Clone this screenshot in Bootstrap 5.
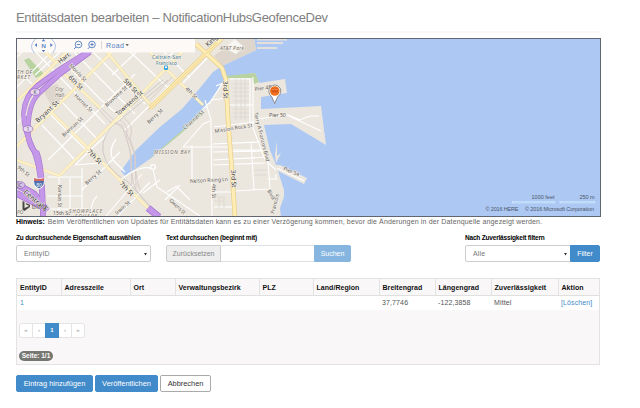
<!DOCTYPE html>
<html lang="de">
<head>
<meta charset="utf-8">
<title>Entitätsdaten bearbeiten</title>
<link href="https://cdn.jsdelivr.net/npm/bootstrap@5.3.0/dist/css/bootstrap.min.css" rel="stylesheet">
<style>
html{font-size:7px}
body{font-family:"Liberation Sans",Arial,sans-serif;font-size:7px;line-height:10px;color:#555;background:#fff;overflow:hidden}
.page{width:584px;margin-left:16px}
.title{font-size:13px;line-height:16px;color:#808080;font-weight:400;height:31px;padding-top:10px;letter-spacing:-.33px;white-space:nowrap}
.rule{height:2px;background:#f8f8f8;margin-bottom:5px}
.map{height:179px;border:1px solid #5f6671;width:585px}
.map svg{display:block;width:583px;height:177px}
.hint{height:17px;line-height:10px;font-size:7px;color:#666;letter-spacing:.15px;white-space:nowrap}
.hint b{color:#000;margin-right:3px;letter-spacing:0}
.lbl{display:block;color:#000;font-weight:700;font-size:6.5px;letter-spacing:-.19px;line-height:8px;height:11px;white-space:nowrap}
.form-select,.form-control,.btn{height:17px;min-height:0;font-size:7px;line-height:9px;padding:3px 7px;border-radius:2px;white-space:nowrap}
.form-select{border-color:#ccc;color:#777;letter-spacing:.15px;background-position:right 3px center;background-size:3px 4px;background-image:url("data:image/svg+xml,%3Csvg xmlns='http://www.w3.org/2000/svg' viewBox='0 0 4 4'%3E%3Cpath d='M0 .5h4L2 4z' fill='%23333'/%3E%3C/svg%3E")}
.btn-primary{background:#428bca;border-color:#428bca}
.btn-primary:disabled{background:#86b6e0;border-color:#86b6e0;opacity:1}
.btn-reset{background:#eee;border-color:#ccc;color:#888;width:55px}
.btn-search{width:37px}.btn-filter{width:30px}
.controls{height:44px}
.w-prop{width:135px}.w-search{width:185px;margin-left:15px}.w-filter{width:135px}
.grid-box{border:1px solid #e3e3e3;background:#f9f7f8;height:87px}
.grid-box table{table-layout:fixed;width:582px;margin:0;--bs-table-bg:transparent}
.grid-box th,.grid-box td{padding:0 3px!important;white-space:nowrap;font-size:7px;line-height:14px;height:15px}
.grid-box th{color:#111;height:16px;letter-spacing:.05px;border-right:1px solid #e3e3e3;border-bottom:1px solid #e0e0e0}
.grid-box th:last-child{border-right:0}
.grid-box td{background:#fff;border:0;color:#555;letter-spacing:.12px}
.link{color:#428bca;text-decoration:none}
.pagination{margin:13px 0 0 2px;height:15px}
.page-link{padding:0;width:14px;height:15px;line-height:13px;text-align:center;font-size:6px;color:#999;border-color:#e4e4e4}
.page-item.active .page-link{background:#428bca;border-color:#428bca;font-weight:700}
.page-badge{display:block;width:34px;height:10px;line-height:10px;border-radius:5px;background:#777772;color:#fff;font-weight:700;font-size:6.5px;text-align:center;margin:13px 0 0 2px;white-space:nowrap}
.actions{margin-top:10px;gap:2px}
.actions .btn{padding-left:0;padding-right:0;font-size:7.4px}
.b1{width:77px}.b2{width:63px}.b3{width:51px}
.btn-cancel{border-color:#aaa;color:#333;background:#fff}
</style>
<script src="https://cdn.jsdelivr.net/npm/bootstrap@5.3.0/dist/js/bootstrap.bundle.min.js"></script>
</head>
<body>
<main class="page">
<h1 class="title m-0">Entitätsdaten bearbeiten – NotificationHubsGeofenceDev</h1>
<div class="rule"></div>
<div class="map">
<svg viewBox="17 39 583 177" preserveAspectRatio="none" font-family="Noto Sans, sans-serif" font-size="6" fill="#555">
<rect x="16" y="38" width="585" height="180" fill="#adc8f3"/>
<!-- land -->
<path fill="#ebe6de" d="M16 38H254L256 50 222 66 213 72 200 88 182 109 160 127 136 150 121 171 125 176 150 159 168 144 184 129 202 112 213 97 226 77 255 73 259 83 285 79 287 93 261 97V109L321 106 326 145 291 124 264 125 270 150 276 165 280 165 307 178 304 184 278 171 284 190V197L280 208 281 218H16Z"/>
<path fill="#ebe6de" d="M277 141L275 155 276 163 281 153 277 156Z"/>
<g stroke="#e5e0db" stroke-width="1.8"><path d="M257 39.5H287M257 43H283M257 48H277"/></g>
<!-- parks and landmarks -->
<path fill="#b9d3a0" d="M226 76L255 73 259 82 254 84 252 78H227ZM24 60L29 58 44 74 36 78ZM184 129L202 111 203 114 190 126 172 141 148 160 150 158Z"/>
<path fill="#ded6cc" d="M43 90L57 84 67 97 52 107ZM238 38H254L256 50 222 66 214 56Z"/>
<path fill="#f8f6f2" d="M225 48L235 39 244 47 236 54Z"/>
<!-- local streets -->
<g fill="none" stroke="#fff" stroke-width="1.1">
<path d="M16 68L40 92M30 46L85 103 105 124M62 60L100 99 122 118M70 48L135 114M85 44L145 104M48 112L90 154M60 100L98 140M123 45L168 88M160 48L190 78M42 125L75 160"/>
<path d="M16 88L55 48M16 125L24 116M48 160L135 74M75 165L104 137 133 103M82 190L120 152M112 75L145 44M125 130L170 85M35 75L60 52M16 58L30 44M165 60L185 40M183 83L210 55"/>
<path d="M48 177H82M47 196H82M46 209H88M59 177V216M70 178V214M82 168V216M75 165L100 163M90 216Q91 202 97 196M106 216L142 174M118 216L150 182M143 193L160 180M157 187L200 216M153 169L157 187M167 192L177 186M177 187L190 200M165 200L180 185"/>
<path d="M205 100L211 120 212 216M202 110L212 100 227 98M183 147L203 124 210 121M183 147H228M192 145V180M213 144L260 142M213 152L265 151M213 165L265 163M213 160L267 157M234 191L268 189M213 192H234M214 207H234M251 142L254 190M268 161L270 189M253 77V128L265 160 276 170M230 79H250V127M229 105H253M214 127L254 122M229 150H262M276 174V179H268M216 86L225 82M209 104L222 84"/>
<path d="M257 119L288 115 300 120 310 116H319M289 116L321 131M277 168L304 181"/>
</g>
<g fill="none" stroke="#dcd7d0" stroke-width=".8"><path d="M233 84H249M233 88H249M233 92H249M233 96H249M233 101H249M233 109H249M233 113H249M233 117H249M236 79V120M241 79V120M245 79V120M214 197H224V209M214 201H224M219 197V209M254 170H267M254 175H267"/></g>
<!-- railway -->
<g fill="none" stroke="#d9ceca" stroke-width="1"><path d="M120 120Q130 126 126 136L131 155Q131 180 136 190L156 214M124 118Q135 126 130 138L135 155Q135 178 140 190M95 105L110 122 122 125 130 150 132 185M100 107L126 132 135 155 136 188M150 100L172 77"/></g>
<g fill="none" stroke="#cfcac5" stroke-width="1"><path d="M168 80L120 120Q100 135 103 152T128 182L150 206M163 80L118 117"/></g>
<g fill="none" stroke="#fff" stroke-width="1.3"><path d="M116 139Q108 150 113 160L125 172M120 180L130 173Q142 166 151 168"/><circle cx="153" cy="167" r="2.4"/></g>
<!-- arterial roads -->
<g fill="none" stroke="#eadca6" stroke-width="2.8"><path d="M16 102L76 43M16 147L40 123 112 52M60 175L119 117 181 53 196 38M101 45L153 108M148 50L164 67 203 105M60 70L100 108M47 108L87 147 156 216M16 160L60 176M32 38L55 62"/></g>
<g fill="none" stroke="#fff2c8" stroke-width="1.9"><path d="M16 102L76 43M16 147L40 123 112 52M60 175L119 117 181 53 196 38M101 45L153 108M148 50L164 67 203 105M60 70L100 108M47 108L87 147 156 216M16 160L60 176M32 38L55 62"/></g>
<g fill="none" stroke="#e7cf89" stroke-width="4.6"><path d="M222 38L150 108M196 44L222 68 226 80 228 120 231 158 235 217"/></g>
<g fill="none" stroke="#ffedb5" stroke-width="3.2"><path d="M222 38L150 108M196 44L222 68 226 80 228 120 231 158 235 217"/></g>
<path d="M217 43L148 110" stroke="#e3c986" stroke-width=".8"/>
<!-- freeway -->
<g fill="none"><path d="M94 48L62 68 37 86Q25 96 24 112T34 151Q42 170 43 217" stroke="#ab7cd2" stroke-width="5.4"/><path d="M90 52L60 74 38 94Q29 103 28 125T37 153Q43 170 43 217" stroke="#ab7cd2" stroke-width="5.4"/><path d="M16 184L34 194 47 211M16 193L43 207M148 208L159 217" stroke="#ab7cd2" stroke-width="7"/><path d="M94 48L62 68 37 86Q25 96 24 112T34 151Q42 170 43 217" stroke="#c497e8" stroke-width="4"/><path d="M90 52L60 74 38 94Q29 103 28 125T37 153Q43 170 43 217" stroke="#c497e8" stroke-width="4"/><path d="M16 184L34 194 47 211M16 193L43 207M148 208L159 217" stroke="#c497e8" stroke-width="5.4"/></g>
<path d="M38 90Q28 99 26 116" stroke="#ebe6de" stroke-width="1.2" fill="none"/>
<!-- route shields -->
<g stroke="#9268b7" stroke-width=".7"><ellipse cx="35" cy="92" rx="5" ry="3.3" fill="#e8d8f3"/><ellipse cx="28" cy="129" rx="5" ry="3.3" fill="#e8d8f3"/><ellipse cx="20" cy="185" rx="5" ry="3.3" fill="#d9bfec"/></g>
<text x="35" y="94" font-size="5" text-anchor="middle">K</text><text x="28" y="131" font-size="5" text-anchor="middle">1</text><text x="17.5" y="187" font-size="5">JC</text>
<path d="M34 178Q39 180 44 178 46 186 39 189 32 186 34 178Z" fill="#4e70ae" stroke="#fff"/><path d="M34 178Q39 180 44 178V181H34Z" fill="#d46a62"/><text x="39" y="187" font-size="5" fill="#fff" text-anchor="middle">80</text>
<!-- street names -->
<g stroke="#f5f0e7" stroke-width="1" paint-order="stroke">
<g fill="#333" font-size="6.4">
<text transform="translate(60 64) rotate(-39)">Harr.</text><text transform="translate(68 78) rotate(44)">6th St</text><text transform="translate(123 81) rotate(47)">5th St</text><text transform="translate(38 123) rotate(-43)" textLength="29">Bryant St</text><text transform="translate(118 116) rotate(-42)" textLength="34" font-size="6">Townsend St</text><text transform="translate(87 152) rotate(46)">7th St</text><text transform="translate(119 184) rotate(46)">7th St</text><text transform="translate(223 81) rotate(88)">3rd St</text><text transform="translate(231 170) rotate(87)">3rd St</text><text transform="translate(208 47) rotate(-43)">King</text><text transform="translate(23 193) rotate(40)" font-size="7">Central F</text>
</g>
<g font-size="5.2">
<text transform="translate(69 66) rotate(46)">Morris St</text><text transform="translate(74 96) rotate(45)" textLength="23">Harriet St</text><text transform="translate(64 137) rotate(-43)" textLength="26">Brannan St</text><text transform="translate(107 107) rotate(-43)" textLength="28">Bluxome St</text><text transform="translate(149 124) rotate(-43)">Berry St</text><text transform="translate(87 185) rotate(-42)">Berry St</text><text transform="translate(185 89) rotate(45)">4th St</text><text transform="translate(185 130) rotate(-42)" textLength="26">Channel St</text><text transform="translate(117 215) rotate(-42)" textLength="18">Irwin St</text><text transform="translate(58 185) rotate(90)" textLength="22">Kansas St</text><text x="53" y="215">15th St</text><text transform="translate(169 201) rotate(43)" textLength="20">Owens St</text><text x="190" y="183" transform="rotate(-3 190 183)" textLength="38">Nelson Rising Ln</text><text transform="translate(212 184) rotate(90)">4th St</text><text transform="translate(215 133) rotate(-9)" textLength="38">Mission Rock St</text><text transform="translate(254 113) rotate(76)" textLength="50">Terry A Francois Blvd</text><text transform="translate(267 191) rotate(60)">Blvd</text><text transform="translate(274 214) rotate(-75)">Francois</text><text x="255" y="91" transform="rotate(-8 255 91)">Pier 48</text><text x="269" y="117">Pier 50</text><text transform="translate(283 170) rotate(22)">Pier 54</text>
<text transform="translate(17 168) rotate(40)">9th St</text>
</g>
<g font-style="italic" font-size="5" fill="#766f69"><text x="17" y="73.5" textLength="15">TH OF</text><text x="17" y="79" textLength="13">RKET</text><text x="55" y="91">City</text><text x="55" y="97">Hall</text><text x="220" y="50" textLength="24">AT&amp;T Park</text><text x="154" y="154" textLength="36">MISSION BAY</text><text x="69" y="212.5" textLength="33">SHOWPLACE</text><text x="75" y="218" textLength="22">SQUARE</text><text x="17" y="214">PO</text></g>
<g font-size="4.8" fill="#397799"><text x="152" y="59" textLength="29">Caltrain-San</text><text x="156" y="64.5" textLength="21">Francisco</text></g>
</g>
<rect x="164" y="65.5" width="4" height="4.5" rx="1" fill="#3ca2e0"/><path d="M165 66.5h2v1.5h-2z" fill="#fff"/>
<!-- navigation bar -->
<path d="M17 38H195V52.5H17Z" fill="#fcf9f7"/>
<path d="M35.5 39Q28 46 34.5 53M51.5 39Q59 46 52.5 53" fill="none" stroke="#9db5df" stroke-width=".8"/>
<g fill="#537cc0"><path d="M41.8 41.3L43.5 39 45.2 41.3ZM41.8 50L43.5 52.3 45.2 50ZM37 43.3L34.6 45.1 37 47ZM50.3 43.3L52.8 45.1 50.3 47Z"/><text x="41.2" y="47.6" font-size="6" font-weight="600">N</text></g>
<g fill="none" stroke="#537cc0" stroke-width=".9"><circle cx="78.5" cy="44.5" r="3.3"/><path d="M76.8 44.5h3.4M76 47l-2 2"/><circle cx="92" cy="44.5" r="3.3"/><path d="M90.3 44.5h3.4M92 42.8v3.4M89.7 47l-2 2"/></g>
<path d="M101.5 41V49" stroke="#ccc" stroke-width=".7"/><text x="106" y="47.5" font-family="Liberation Sans" font-size="7" textLength="18" fill="#537cc0">Road</text><path d="M125.5 44h3.4l-1.7 2.3z" fill="#666"/>
<!-- pushpin -->
<path d="M274.7 103.5L271.8 97Q268.8 94.5 268.8 91A6 6 0 0 1 280.8 91Q280.8 94.5 277.6 97Z" fill="#fff" stroke="#777" stroke-width=".8"/><circle cx="274.8" cy="91" r="4.8" fill="#ef701d"/><path d="M271.7 88.5h6.2v4h-6.2z" fill="#d95817"/><path d="M271.8 89.5h6" stroke="#f6a365" stroke-width=".6"/>
<!-- provider logo, scale and copyright -->
<path d="M22.5 201L24.5 202V208L29.2 206 26.2 204.5 25.7 203 30 204.8V207L24.5 211 22.5 209.5Z" fill="#4a4845"/><text x="32" y="208.5" font-family="Liberation Sans" font-size="6.5" fill="#67625f" textLength="14">bing</text>
<g font-family="Liberation Sans" font-size="5.5" fill="#4c5667"><text x="531.5" y="199.3" textLength="23">1000 feet</text><text x="579.5" y="199.3" textLength="15">250 m</text><text x="485.5" y="210.6" textLength="33">© 2016 HERE</text><text x="525" y="210.6" textLength="69">© 2016 Microsoft Corporation</text></g>
<path d="M512 202.2H555M559.5 202.2H595" stroke="#d5e7ff" stroke-width="2"/><path d="M513 202.2H554M560.5 202.2H594" stroke="#a9cff5" stroke-width=".7"/>
</svg>
</div>
<div class="hint"><b>Hinweis:</b>Beim Veröffentlichen von Updates für Entitätsdaten kann es zu einer Verzögerung kommen, bevor die Änderungen in der Datenquelle angezeigt werden.</div>
<div class="controls d-flex">
<div class="w-prop"><label class="lbl">Zu durchsuchende Eigenschaft auswählen</label><select class="form-select"><option>EntityID</option></select></div>
<div class="w-search"><label class="lbl">Text durchsuchen (beginnt mit)</label><div class="input-group flex-nowrap"><button class="btn btn-reset px-1">Zurücksetzen</button><input class="form-control" aria-label="Suche"><button class="btn btn-primary btn-search px-0" disabled>Suchen</button></div></div>
<div class="w-filter ms-auto"><label class="lbl">Nach Zuverlässigkeit filtern</label><div class="input-group flex-nowrap"><select class="form-select"><option>Alle</option></select><button class="btn btn-primary btn-filter px-0">Filter</button></div></div>
</div>
<section class="grid-box">
<table class="table">
<colgroup><col style="width:44px"><col style="width:69px"><col style="width:45px"><col style="width:84px"><col style="width:54px"><col style="width:66px"><col style="width:56px"><col style="width:56px"><col style="width:67px"><col></colgroup>
<thead><tr><th>EntityID</th><th>Adresszeile</th><th>Ort</th><th>Verwaltungsbezirk</th><th>PLZ</th><th>Land/Region</th><th>Breitengrad</th><th>Längengrad</th><th>Zuverlässigkeit</th><th>Aktion</th></tr></thead>
<tbody><tr><td><a class="link">1</a></td><td></td><td></td><td></td><td></td><td></td><td>37,7746</td><td>-122,3858</td><td>Mittel</td><td><a class="link">[Löschen]</a></td></tr></tbody>
</table>
<ul class="pagination"><li class="page-item"><a class="page-link">«</a></li><li class="page-item"><a class="page-link">‹</a></li><li class="page-item active"><a class="page-link">1</a></li><li class="page-item"><a class="page-link">›</a></li><li class="page-item"><a class="page-link">»</a></li></ul>
<span class="page-badge">Seite: 1/1</span>
</section>
<div class="actions d-flex"><button class="btn btn-primary b1">Eintrag hinzufügen</button><button class="btn btn-primary b2">Veröffentlichen</button><button class="btn btn-cancel b3">Abbrechen</button></div>
</main>
</body>
</html>
